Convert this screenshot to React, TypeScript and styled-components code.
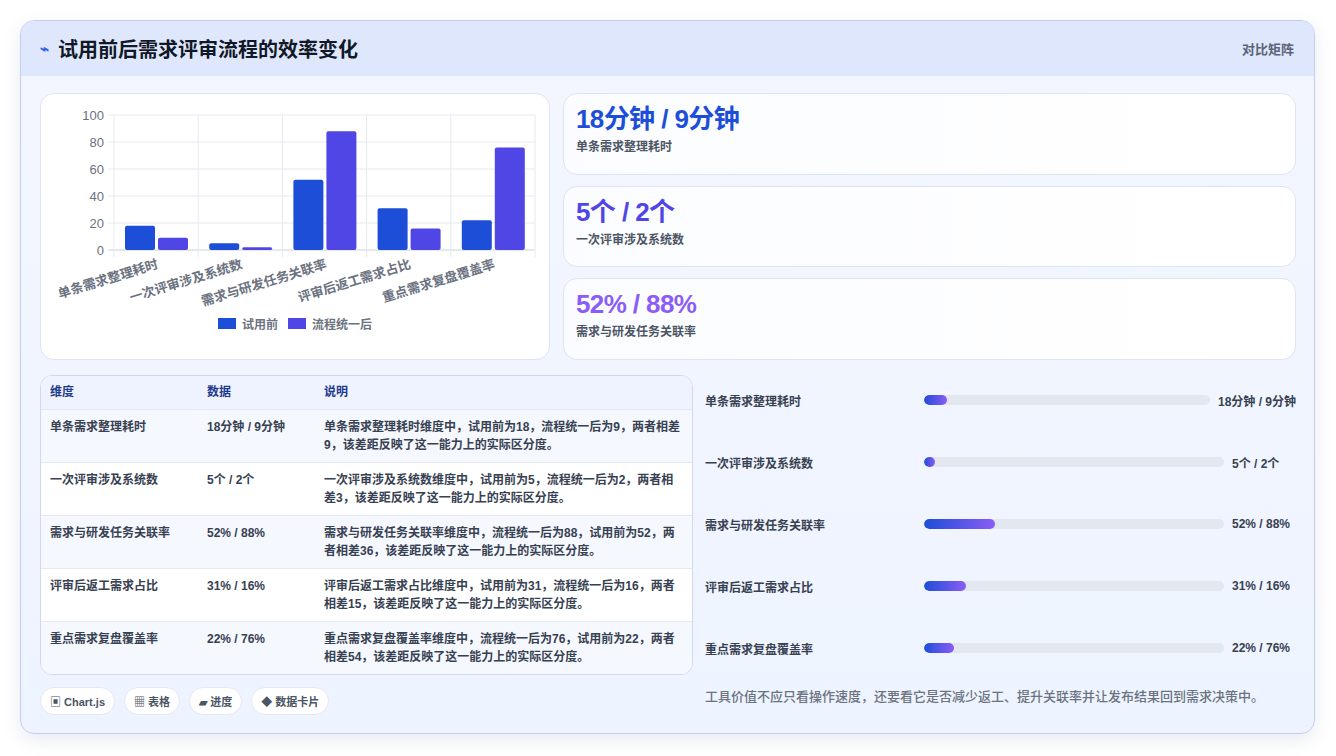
import React from "react";
import styled, { createGlobalStyle } from "styled-components";

const Global = createGlobalStyle`
  html, body { margin: 0; padding: 0; background: #ffffff; }
  body { font-family: "Liberation Sans", "Noto Sans CJK SC", sans-serif; }
`;

const Page = styled.div`
  width: 1336px; height: 756px; box-sizing: border-box; padding: 20px 21px 22px 20px;
`;
const Card = styled.div`
  height: 100%; box-sizing: border-box; border: 1px solid #c3cdf1; border-radius: 14px;
  background: linear-gradient(180deg, #f3f6fe 0%, #eef4ff 100%);
  box-shadow: 0 6px 18px rgba(70, 90, 160, 0.12);
  overflow: hidden; display: flex; flex-direction: column;
`;
const Header = styled.div`
  height: 55px; flex-shrink: 0; background: #dfe7fc; display: flex; align-items: center;
  justify-content: space-between; padding: 0 20px 0 19px;
`;
const Title = styled.h1`
  margin: 0; font-size: 20px; font-weight: 700; color: #111827; display: flex; align-items: center; gap: 9px;
`;
const Bolt = styled.span` color: #2f5ee5; font-size: 15px; `;
const HeaderTag = styled.span` font-size: 13px; color: #5b6477; font-weight: 600; `;
const Body = styled.div`
  flex: 1; padding: 17px 18px 16px 19px; display: flex; flex-direction: column; gap: 15px;
`;
const TopRow = styled.div` display: grid; grid-template-columns: 510px 1fr; gap: 13px; height: 267px; `;
const Panel = styled.div`
  background: #fff; border: 1px solid #dde4f3; border-radius: 14px; box-sizing: border-box;
`;
const ChartPanel = styled(Panel)` padding: 10px 10px 0 10px; display: flex; flex-direction: column; align-items: center; `;
const Legend = styled.div` display: flex; gap: 10px; font-size: 12px; color: #6b7280; font-weight: 600; margin-top: -4px; `;
const LegendItem = styled.span` display: flex; align-items: center; gap: 6px; `;
const Swatch = styled.span<{ c: string }>` width: 18px; height: 11px; background: ${p => p.c}; `;
const Stats = styled.div` display: flex; flex-direction: column; gap: 11px; `;
const Stat = styled(Panel)`
  flex: 1; background: linear-gradient(90deg, #fbfcff, #ffffff); padding: 9px 12px;
  display: flex; flex-direction: column; gap: 2px;
`;
const StatValue = styled.div<{ c: string }>` font-size: 26px; font-weight: 700; color: ${p => p.c}; letter-spacing: -0.6px; line-height: 32px; `;
const StatLabel = styled.div` font-size: 12px; color: #4b5563; font-weight: 600; `;
const BottomRow = styled.div` display: grid; grid-template-columns: 653px 1fr; gap: 12px; flex: 1; `;
const LeftCol = styled.div` display: flex; flex-direction: column; gap: 12px; `;
const Table = styled.div`
  border: 1px solid #cfd8ee; border-radius: 12px; overflow: hidden; background: #fff;
`;
const Row = styled.div<{ head?: boolean; alt?: boolean }>`
  display: grid; grid-template-columns: 157px 117px 1fr; padding: 0 9px;
  font-size: 12px; line-height: 18px; font-weight: ${p => (p.head ? 700 : 600)};
  color: ${p => (p.head ? "#1e3a8a" : "#374151")};
  background: ${p => (p.head ? "#eef3ff" : p.alt ? "#f5f8fe" : "#ffffff")};
  height: ${p => (p.head ? 33 : 53)}px; box-sizing: border-box;
  padding-top: ${p => (p.head ? 7 : 8)}px;
  border-top: ${p => (p.head ? "none" : "1px solid #e3e8f3")};
`;
const Chips = styled.div` display: flex; gap: 9px; `;
const Chip = styled.span`
  font-size: 11px; font-weight: 600; color: #4b5563; background: #fff; border: 1px solid #e3e8f3;
  border-radius: 14px; padding: 7px 9px; height: 28px; box-sizing: border-box; display: flex; align-items: center;
`;
const RightCol = styled.div` display: flex; flex-direction: column; padding-top: 16px; `;
const Bars = styled.div` display: flex; flex-direction: column; gap: 44px; `;
const BarRow = styled.div` display: grid; grid-template-columns: 211px 1fr auto; align-items: center; gap: 8px; height: 18px; `;
const BarLabel = styled.span` font-size: 12px; font-weight: 600; color: #374151; `;
const Track = styled.div` height: 10px; border-radius: 5px; background: #e3e7f0; overflow: hidden; `;
const Fill = styled.div` height: 100%; border-radius: 5px; background: linear-gradient(90deg, #1d4ed8, #8b5cf6); `;
const BarValue = styled.span` font-size: 12px; font-weight: 600; color: #374151; min-width: 64px; `;
const Note = styled.p` margin: 29px 0 0; font-size: 13px; color: #6b7280; font-weight: 500; `;

const data = [
  { n: "单条需求整理耗时", v: "18分钟 / 9分钟", a: 18, b: 9, d: "单条需求整理耗时维度中，试用前为18，流程统一后为9，两者相差9，该差距反映了这一能力上的实际区分度。", f: 8 },
  { n: "一次评审涉及系统数", v: "5个 / 2个", a: 5, b: 2, d: "一次评审涉及系统数维度中，试用前为5，流程统一后为2，两者相差3，该差距反映了这一能力上的实际区分度。", f: 3.5 },
  { n: "需求与研发任务关联率", v: "52% / 88%", a: 52, b: 88, d: "需求与研发任务关联率维度中，流程统一后为88，试用前为52，两者相差36，该差距反映了这一能力上的实际区分度。", f: 23.5 },
  { n: "评审后返工需求占比", v: "31% / 16%", a: 31, b: 16, d: "评审后返工需求占比维度中，试用前为31，流程统一后为16，两者相差15，该差距反映了这一能力上的实际区分度。", f: 14 },
  { n: "重点需求复盘覆盖率", v: "22% / 76%", a: 22, b: 76, d: "重点需求复盘覆盖率维度中，流程统一后为76，试用前为22，两者相差54，该差距反映了这一能力上的实际区分度。", f: 10 },
];

function Chart() {
  const x0 = 64, x1 = 485, y0 = 11, y1 = 146, w = (x1 - x0) / 5;
  const yv = (v: number) => y1 - (v / 100) * (y1 - y0);
  return (
    <svg width="490" height="215" style={{ display: "block" }}>
      {[0, 20, 40, 60, 80, 100].map(t => (
        <g key={t}>
          <line x1={x0 - 6} x2={x1} y1={yv(t)} y2={yv(t)} stroke={t === 0 ? "#cbd2e0" : "#e5e9f0"} />
          <text x={x0 - 10} y={yv(t) + 5} fontSize="13" fill="#6b7280" textAnchor="end" fontFamily="Liberation Sans">{t}</text>
        </g>
      ))}
      {[0, 1, 2, 3, 4, 5].map(i => (
        <line key={i} x1={x0 + i * w} x2={x0 + i * w} y1={y0} y2={y1 + 7} stroke="#e5e9f0" />
      ))}
      {data.map((d, i) => {
        const cx = x0 + i * w;
        return (
          <g key={d.n}>
            <rect x={cx + 11} y={yv(d.a)} width={30} height={y1 - yv(d.a)} rx={2} fill="#1d4ed8" />
            <rect x={cx + 44} y={yv(d.b)} width={30} height={y1 - yv(d.b)} rx={2} fill="#4f46e5" />
            <text transform={`translate(${cx + 45},${y1 + 18}) rotate(-17)`} fontSize="13" fontWeight="600" fill="#6b7280" textAnchor="end" fontFamily="Liberation Sans, Noto Sans CJK SC">{d.n}</text>
          </g>
        );
      })}
    </svg>
  );
}

export default function App() {
  return (
    <Page>
      <Global />
      <Card>
        <Header>
          <Title><Bolt>⌁</Bolt>试用前后需求评审流程的效率变化</Title>
          <HeaderTag>对比矩阵</HeaderTag>
        </Header>
        <Body>
          <TopRow>
            <ChartPanel>
              <Chart />
              <Legend>
                <LegendItem><Swatch c="#1d4ed8" />试用前</LegendItem>
                <LegendItem><Swatch c="#4f46e5" />流程统一后</LegendItem>
              </Legend>
            </ChartPanel>
            <Stats>
              <Stat><StatValue c="#1d4ed8">18分钟 / 9分钟</StatValue><StatLabel>单条需求整理耗时</StatLabel></Stat>
              <Stat><StatValue c="#4f46e5">5个 / 2个</StatValue><StatLabel>一次评审涉及系统数</StatLabel></Stat>
              <Stat><StatValue c="#8b5cf6">52% / 88%</StatValue><StatLabel>需求与研发任务关联率</StatLabel></Stat>
            </Stats>
          </TopRow>
          <BottomRow>
            <LeftCol>
              <Table>
                <Row head><span>维度</span><span>数据</span><span>说明</span></Row>
                {data.map((d, i) => (
                  <Row key={d.n} alt={i % 2 === 0}><span>{d.n}</span><span>{d.v}</span><span>{d.d}</span></Row>
                ))}
              </Table>
              <Chips>
                <Chip>▣ Chart.js</Chip><Chip>▦ 表格</Chip><Chip>▰ 进度</Chip><Chip>◆ 数据卡片</Chip>
              </Chips>
            </LeftCol>
            <RightCol>
              <Bars>
                {data.map(d => (
                  <BarRow key={d.n}>
                    <BarLabel>{d.n}</BarLabel>
                    <Track><Fill style={{ width: `${d.f}%` }} /></Track>
                    <BarValue>{d.v}</BarValue>
                  </BarRow>
                ))}
              </Bars>
              <Note>工具价值不应只看操作速度，还要看它是否减少返工、提升关联率并让发布结果回到需求决策中。</Note>
            </RightCol>
          </BottomRow>
        </Body>
      </Card>
    </Page>
  );
}
